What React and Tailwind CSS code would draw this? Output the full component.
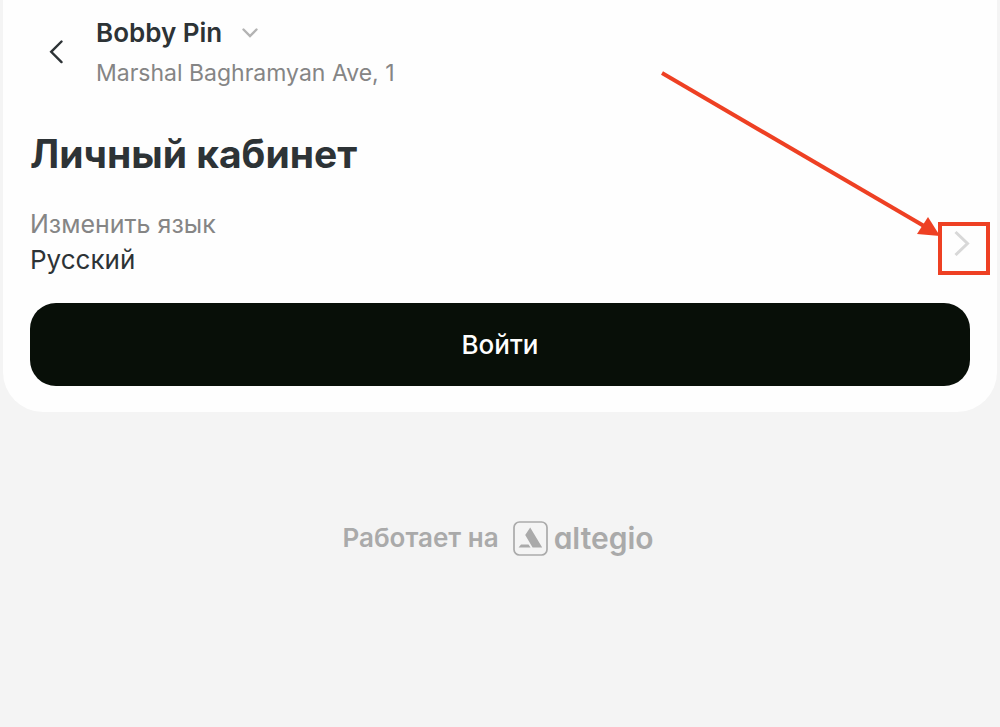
import React from "react";

function Header() {
  return (
    <header className="flex items-center gap-3">
      <button type="button" aria-label="Назад" className="flex h-10 w-[54px] items-center justify-center text-[#2d3336]">
        <svg width="16" height="26" viewBox="0 0 16 26" fill="none" stroke="currentColor" strokeWidth="2.4" strokeLinecap="round">
          <path d="M12.5 1.5 2.2 11.8l10.3 10.3" />
        </svg>
      </button>
      <div className="flex flex-col">
        <button type="button" className="flex items-center gap-5 text-left text-[26px] leading-10 font-semibold">
          Bobby Pin
          <svg width="16" height="10" viewBox="0 0 16 10" fill="none" stroke="#b3b3b3" strokeWidth="2.4" strokeLinecap="round" aria-hidden="true">
            <path d="m1.5 1.5 6.5 6.5 6.5-6.5" />
          </svg>
        </button>
        <p className="text-[23px] leading-10 text-[#858585]">Marshal Baghramyan Ave, 1</p>
      </div>
    </header>
  );
}

function Callout() {
  return (
    <div aria-hidden="true" className="pointer-events-none absolute -right-5 bottom-[3px]">
      <div className="h-[53px] w-[52px] border-4 border-[#ee4023]" />
      <svg className="absolute right-[50px] bottom-[37px]" width="280" height="168" viewBox="0 0 280 168">
        <path d="M2 3 264 156" stroke="#ee4023" strokeWidth="4" />
        <path d="M268 147 280 166 257 164Z" fill="#ee4023" />
      </svg>
    </div>
  );
}

function LanguageRow() {
  return (
    <div className="relative mt-[26px]">
      <button type="button" className="flex w-full items-center justify-between text-left">
        <span className="flex flex-col">
          <span className="text-[25px] leading-9 text-[#858585]">Изменить язык</span>
          <span className="text-[26px] leading-9">Русский</span>
        </span>
        <svg width="16" height="28" viewBox="0 0 16 28" fill="none" stroke="#d8d8d8" strokeWidth="3" aria-hidden="true">
          <path d="M1.5 4 13.5 15.5 1.5 27" />
        </svg>
      </button>
      <Callout />
    </div>
  );
}

function Footer() {
  return (
    <footer className="mt-[106px] flex items-center justify-center gap-[14px] pr-1 text-[#aaaaaa]">
      <span className="text-[26px] leading-10 font-semibold">Работает на</span>
      <a href="#altegio" className="flex items-center gap-[6px]">
        <svg width="35" height="35" viewBox="0 0 35 35" aria-hidden="true">
          <rect x="1" y="1" width="33" height="33" rx="5.5" fill="none" stroke="currentColor" strokeWidth="1.7" />
          <path d="M17.2 6.5 29.2 26.5H19.6L12.2 14ZM8 23.4H15.5L17.6 26.5H5.6Z" fill="currentColor" />
        </svg>
        <span className="text-[30px] leading-10 font-semibold [font-feature-settings:'cv11']">altegio</span>
      </a>
    </footer>
  );
}

export default function App() {
  return (
    <div className="min-h-screen bg-[#f4f4f4] font-['Inter','Liberation_Sans',sans-serif] text-[#2d3336]">
      <main className="mx-[3px] rounded-b-[40px] bg-[#fefefe] px-[27px] pt-[13px] pb-[26px]">
        <Header />
        <h1 className="mt-[35px] text-[39px] leading-[52px] font-bold">Личный кабинет</h1>
        <LanguageRow />
        <button type="button" className="mt-[25px] block h-[83px] w-full rounded-[26px] bg-[#080f08] text-[26px] leading-9 font-medium text-white">
          Войти
        </button>
      </main>
      <Footer />
    </div>
  );
}
